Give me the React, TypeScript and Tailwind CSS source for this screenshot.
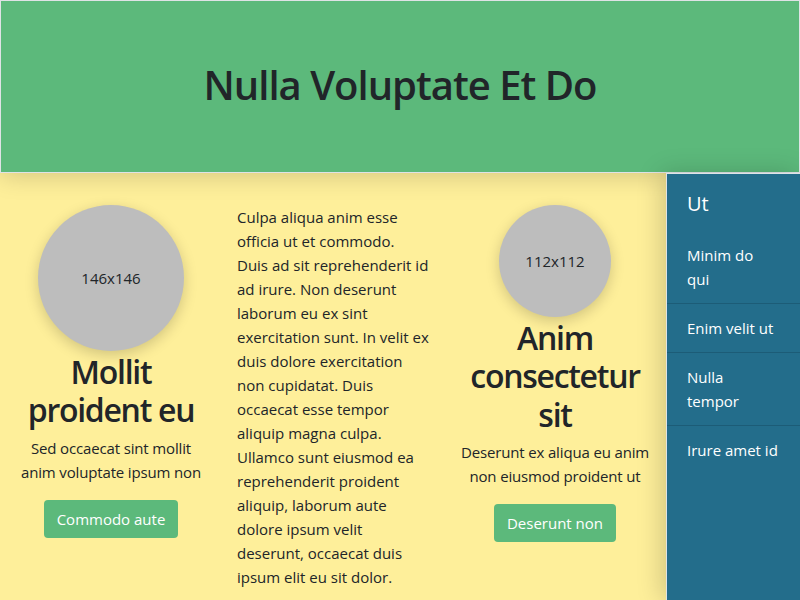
import React from 'react';

const sideItems = ['Minim do qui', 'Enim velit ut', 'Nulla tempor', 'Irure amet id'];

const Feature: React.FC<{ size: number; title: string; text: string; cta: string }> = ({ size, title, text, cta }) => (
  <div className="flex flex-col items-center text-center px-[15px]">
    <div
      className="rounded-full bg-[#bdbdbd] flex items-center justify-center text-[15px] text-[#212529] shadow-[0_4px_14px_rgba(0,0,0,0.18)] shrink-0"
      style={{ width: size, height: size }}
    >
      {size}x{size}
    </div>
    <h2 className="mt-[2px] mb-[6px] text-[32px] leading-[1.2] font-semibold tracking-[-0.04em]">{title}</h2>
    <p className="text-[15px] leading-6 tracking-[-0.01em]">{text}</p>
    <button className="mt-4 h-[38px] px-[13px] rounded-[4px] bg-[#5cb97b] text-white text-[15px]">{cta}</button>
  </div>
);

export default function App() {
  return (
    <div className="w-[800px] h-[600px] overflow-hidden flex flex-col font-['Open_Sans',sans-serif] text-[#212529]">
      <header className="relative z-10 h-[173px] shrink-0 flex items-center justify-center bg-[#5cb97b] border border-[#dfe3e6] shadow-[0_2px_24px_rgba(0,0,0,0.18)]">
        <h1 className="mb-[4px] text-[40px] font-semibold leading-[1.2] tracking-[-0.025em]">Nulla Voluptate Et Do</h1>
      </header>
      <div className="flex flex-1 min-h-0">
        <main className="flex-1 bg-[#feef9a] grid grid-cols-3 items-start pt-[32px]">
          <Feature size={146} title="Mollit proident eu" text="Sed occaecat sint mollit anim voluptate ipsum non" cta="Commodo aute" />
          <p className="px-[15px] text-[15px] leading-6">
            Culpa aliqua anim esse officia ut et commodo. Duis ad sit reprehenderit id ad irure. Non deserunt laborum eu ex sint exercitation sunt. In velit ex duis dolore exercitation non cupidatat. Duis occaecat esse tempor aliquip magna culpa. Ullamco sunt eiusmod ea reprehenderit proident aliquip, laborum aute dolore ipsum velit deserunt, occaecat duis ipsum elit eu sit dolor.
          </p>
          <Feature size={112} title="Anim consectetur sit" text="Deserunt ex aliqua eu anim non eiusmod proident ut" cta="Deserunt non" />
        </main>
        <aside className="relative z-10 w-[134px] shrink-0 bg-[#236d8b] border-l border-t border-[#dfe3e6] text-white pt-[18px] shadow-[-4px_0_24px_rgba(0,0,0,0.18)]">
          <h5 className="px-5 text-[20px] leading-6 mb-[15px]">Ut</h5>
          <ul>
            {sideItems.map((item, i) => (
              <li
                key={item}
                className={`pl-5 pr-[22px] py-3 text-[15px] leading-6 ${i < sideItems.length - 1 ? 'border-b border-[#1c5c77]' : ''}`}
              >
                {item}
              </li>
            ))}
          </ul>
        </aside>
      </div>
    </div>
  );
}
